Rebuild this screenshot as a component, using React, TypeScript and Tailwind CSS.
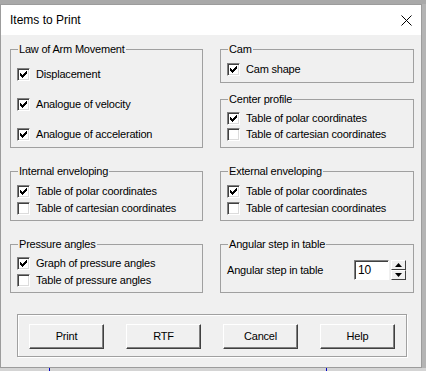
import React from 'react';

const TICK = [2, 3, 4, 3, 2, 1, 0];

function Check({ on }: { on?: boolean }) {
  return (
    <span className="w-[13px] h-[13px] shrink-0 bg-white border border-t-[#808080] border-l-[#808080] border-b-white border-r-white shadow-[inset_1px_1px_0_#404040,inset_-1px_-1px_0_#dcdcdc] flex items-center justify-center">
      {on && (
        <svg width="7" height="7" viewBox="0 0 7 7" shapeRendering="crispEdges">
          {TICK.map((t, i) => (
            <rect key={i} x={i} y={t} width="1" height="3" fill="#000" />
          ))}
        </svg>
      )}
    </span>
  );
}

function Row({ on, label }: { on?: boolean; label: string }) {
  return (
    <div className="flex items-center gap-[6px] h-[13px]">
      <Check on={on} />
      <span>{label}</span>
    </div>
  );
}

function Group({ title, className, children }: { title: string; className: string; children: React.ReactNode }) {
  return (
    <fieldset className={`border border-[#a0a0a0] pl-[6px] ${className}`}>
      <legend className="ml-[1px] px-[1px] leading-[13px]">{title}</legend>
      {children}
    </fieldset>
  );
}

function Btn({ label }: { label: string }) {
  return (
    <button className="w-[75px] h-[25px] bg-[#f0f0f0] border border-t-white border-l-white border-r-[#404040] border-b-[#404040] shadow-[inset_-1px_-1px_0_#808080] text-[11px] leading-none">
      {label}
    </button>
  );
}

export default function App() {
  return (
    <div className="w-[426px] h-[371px] bg-[#c9c9c9] flex flex-col overflow-hidden font-['Liberation_Sans',Arial,sans-serif] text-black text-[11px] tracking-[-0.2px] leading-[13px]">
      {/* desktop behind the dialog */}
      <div className="h-[4px] bg-[#a9a9a9]" />

      <div className="flex">
        <div className="w-[422px] h-[364px] border border-[#9c9c9c] bg-[#f0f0f0] flex flex-col">
          {/* title bar */}
          <div className="h-[30px] bg-white flex items-center justify-between pl-[9px] pr-[9px]">
            <span className="text-[12px] tracking-normal">Items to Print</span>
            <svg width="11" height="11" viewBox="0 0 11 11">
              <path d="M0.5 0.5 L10.5 10.5 M10.5 0.5 L0.5 10.5" stroke="#000" strokeWidth="1" />
            </svg>
          </div>

          {/* body */}
          <div className="flex flex-col pl-[9px] pt-[8px]">
            <div className="flex gap-[17px]">
              <Group title="Law of Arm Movement" className="w-[193px] h-[105px]">
                <div className="flex flex-col gap-[17px] pt-[12px]">
                  <Row on label="Displacement" />
                  <Row on label="Analogue of velocity" />
                  <Row on label="Analogue of acceleration" />
                </div>
              </Group>
              <div className="w-[194px] flex flex-col gap-[10px]">
                <Group title="Cam" className="h-[40px]">
                  <div className="pt-[7px]">
                    <Row on label="Cam shape" />
                  </div>
                </Group>
                <Group title="Center profile" className="h-[55px]">
                  <div className="flex flex-col gap-[3px] pt-[6px]">
                    <Row on label="Table of polar coordinates" />
                    <Row label="Table of cartesian coordinates" />
                  </div>
                </Group>
              </div>
            </div>

            <div className="flex gap-[17px] mt-[17px]">
              <Group title="Internal enveloping" className="w-[193px] h-[56px]">
                <div className="flex flex-col gap-[4px] pt-[7px]">
                  <Row on label="Table of polar coordinates" />
                  <Row label="Table of cartesian coordinates" />
                </div>
              </Group>
              <Group title="External enveloping" className="w-[194px] h-[56px]">
                <div className="flex flex-col gap-[4px] pt-[7px]">
                  <Row on label="Table of polar coordinates" />
                  <Row label="Table of cartesian coordinates" />
                </div>
              </Group>
            </div>

            <div className="flex gap-[17px] mt-[17px]">
              <Group title="Pressure angles" className="w-[193px] h-[55px]">
                <div className="flex flex-col gap-[4px] pt-[6px]">
                  <Row on label="Graph of pressure angles" />
                  <Row label="Table of pressure angles" />
                </div>
              </Group>
              <Group title="Angular step in table" className="w-[194px] h-[55px]">
                <div className="flex items-center pt-[9px]">
                  <span className="w-[127px]">Angular step in table</span>
                  <div className="w-[35px] h-[20px] bg-white border border-t-[#808080] border-l-[#808080] border-b-white border-r-white shadow-[inset_1px_1px_0_#404040] pl-[3px] flex items-center text-[12px]">
                    10
                  </div>
                  <div className="ml-[2px] w-[15px] h-[20px] flex flex-col">
                    <div className="h-[10px] bg-[#f0f0f0] border border-t-white border-l-white border-r-[#404040] border-b-[#404040] flex items-center justify-center">
                      <svg width="7" height="4" viewBox="0 0 7 4"><path d="M3.5 0 L7 4 L0 4 Z" fill="#000" /></svg>
                    </div>
                    <div className="h-[10px] bg-[#f0f0f0] border border-t-white border-l-white border-r-[#404040] border-b-[#404040] flex items-center justify-center">
                      <svg width="7" height="4" viewBox="0 0 7 4"><path d="M0 0 L7 0 L3.5 4 Z" fill="#000" /></svg>
                    </div>
                  </div>
                </div>
              </Group>
            </div>

            <div className="mt-[21px] ml-[7px] w-[390px] h-[43px] border border-[#a0a0a0] shadow-[inset_1px_1px_0_#fff,1px_1px_0_#fff] flex gap-[22px] pl-[11px] pt-[9px]">
              <Btn label="Print" />
              <Btn label="RTF" />
              <Btn label="Cancel" />
              <Btn label="Help" />
            </div>
          </div>
        </div>
        <div className="w-[4px] bg-[#b4b4b4]" />
      </div>

      <div className="h-[3px] bg-[#d4d4d4] relative">
        <span className="absolute left-[49px] top-0 w-[1px] h-[3px] bg-[#0000c8]" />
        <span className="absolute left-[326px] top-0 w-[1px] h-[3px] bg-[#0000c8]" />
      </div>
    </div>
  );
}
